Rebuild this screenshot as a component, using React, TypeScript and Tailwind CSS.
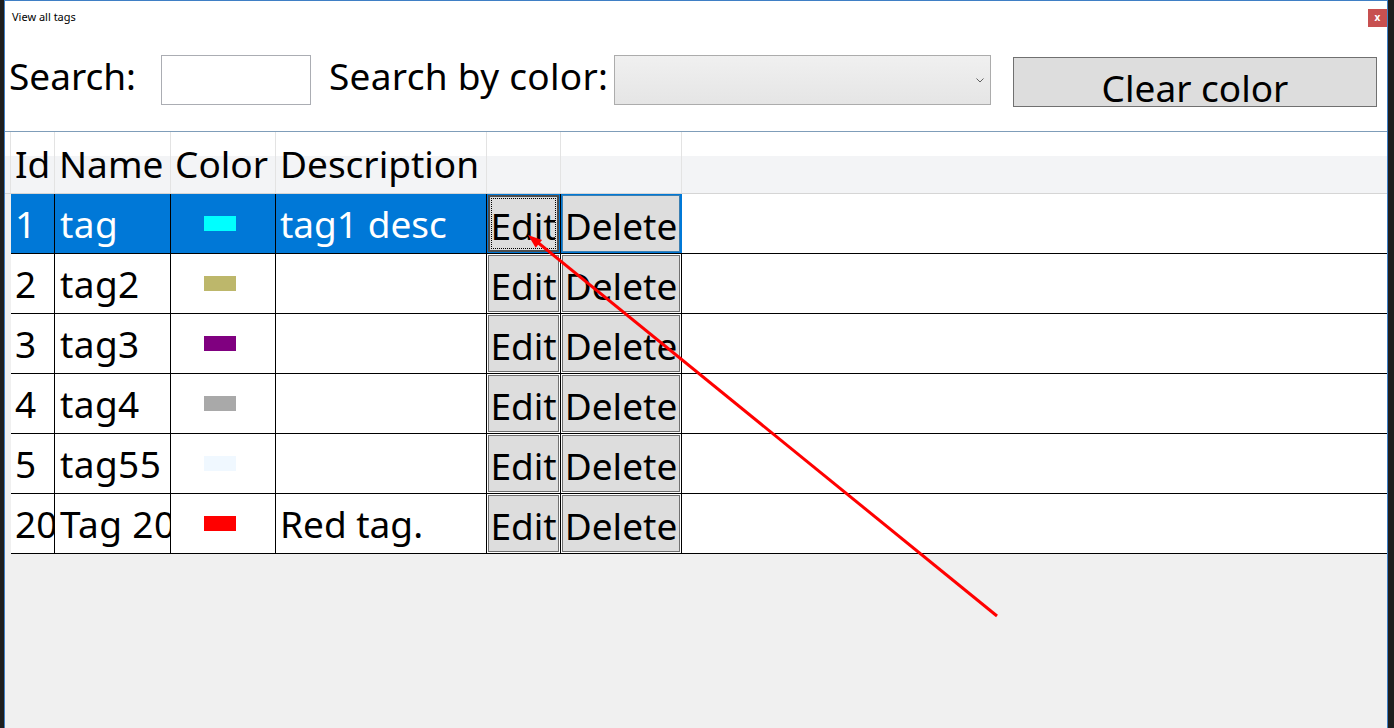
import React from 'react';

type Tag = { id: string; name: string; swatch: string; desc: string };

const tags: Tag[] = [
  { id: '1', name: 'tag', swatch: 'bg-[#00ffff]', desc: 'tag1 desc' },
  { id: '2', name: 'tag2', swatch: 'bg-[#bdb76b]', desc: '' },
  { id: '3', name: 'tag3', swatch: 'bg-[#800080]', desc: '' },
  { id: '4', name: 'tag4', swatch: 'bg-[#a9a9a9]', desc: '' },
  { id: '5', name: 'tag55', swatch: 'bg-[#f0f8ff]', desc: '' },
  { id: '20', name: 'Tag 20', swatch: 'bg-[#ff0000]', desc: 'Red tag.' },
];

const HeaderCell: React.FC<{ w: string; children?: React.ReactNode }> = ({ w, children }) => (
  <div className={`${w} h-full shrink-0 border-r border-[#e3e3e3] pl-[4px] pt-[7px] leading-[50px] overflow-hidden whitespace-nowrap`}>
    {children}
  </div>
);

const TagRow: React.FC<{ tag: Tag; selected: boolean }> = ({ tag, selected }) => {
  const cell = selected
    ? 'bg-[#0078d7] text-white'
    : 'bg-white text-black';
  const text = `h-full shrink-0 border-r border-black pl-[4px] pt-[5px] leading-[50px] overflow-hidden whitespace-nowrap ${cell}`;

  return (
    <div className="flex h-[60px] border-b border-black ml-[6px] bg-white">
      <div className={`w-[44px] ${text}`}>{tag.id}</div>
      <div className={`w-[116px] ${text} pl-[5px] tracking-[0.4px]`}>{tag.name}</div>
      <div className={`w-[105px] h-full shrink-0 border-r border-black flex items-center pl-[33px] ${cell}`}>
        <div className={`w-[32px] h-[15px] ${tag.swatch}`} />
      </div>
      <div className={`w-[211px] ${text}`}>{tag.desc}</div>
      <div className={`w-[74px] h-full shrink-0 border-r border-black p-[1px] ${cell}`}>
        {selected ? (
          <div className="h-full border-2 border-[#4d4d4d] bg-[#dddddd] p-[1px]">
            <div className="h-full border border-dotted border-black flex justify-center pt-[2px] leading-[50px] text-black overflow-hidden">
              Edit
            </div>
          </div>
        ) : (
          <div className="h-full border border-[#707070] bg-[#dddddd] flex justify-center pt-[5px] leading-[50px] text-black overflow-hidden">
            Edit
          </div>
        )}
      </div>
      <div className={`w-[121px] h-full shrink-0 border-r ${selected ? 'border-[#0078d7]' : 'border-black'} p-[1px] ${cell}`}>
        <div className={`h-full border ${selected ? 'border-[#3c7fb1]' : 'border-[#707070]'} bg-[#dddddd] flex justify-center pt-[5px] leading-[50px] text-black overflow-hidden`}>
          Delete
        </div>
      </div>
      <div className="flex-1 bg-white" />
    </div>
  );
};

const App: React.FC = () => {
  return (
    <div className="relative h-screen w-full bg-[#1e1e1e] pl-[4px] pr-[6px] overflow-hidden font-['Noto_Sans',sans-serif] text-black">
      <div className="flex h-full flex-col border-x border-t border-[#3f7fc5] bg-white">
        {/* title bar */}
        <div className="flex h-[33px] shrink-0 items-start justify-between">
          <div className="pl-[7px] pt-[8px] text-[11px] leading-[15px]">View all tags</div>
          <div className="mt-[8px] flex h-[18px] w-[19px] items-center justify-center bg-[#c75050] pb-[2px] text-[10px] font-bold leading-none text-white">
            x
          </div>
        </div>

        {/* search bar */}
        <div className="flex h-[97px] shrink-0 items-start text-[37px]">
          <div className="mt-[17px] w-[156px] shrink-0 pl-[4px] leading-[50px]">Search:</div>
          <div className="mt-[21px] h-[50px] w-[150px] shrink-0 border border-[#abadb3] bg-white" />
          <div className="mt-[17px] w-[303px] shrink-0 pl-[18px] leading-[50px] tracking-[0.3px] whitespace-nowrap">Search by color:</div>
          <div className="mt-[21px] flex h-[50px] w-[377px] shrink-0 items-center justify-end border border-[#acacac] bg-[linear-gradient(to_bottom,#f0f0f0,#e5e5e5)] pr-[6px]">
            <svg width="8" height="5" viewBox="0 0 8 5" fill="none" stroke="#606060" strokeWidth="1">
              <polyline points="0.5,0.5 4,4 7.5,0.5" />
            </svg>
          </div>
          <div className="mt-[23px] ml-[22px] flex h-[50px] w-[364px] shrink-0 justify-center border border-[#707070] bg-[#dddddd] pt-[5px] leading-[50px] overflow-hidden whitespace-nowrap">
            Clear color
          </div>
        </div>

        {/* data grid */}
        <div className="flex-1 border-t border-[#7f9db9] bg-[#f0f0f0] text-[37px]">
          <div className="flex h-[62px] border-b border-[#d5d5d5] bg-[linear-gradient(to_bottom,#ffffff_0%,#ffffff_40%,#f3f4f6_40%,#f3f4f6_100%)]">
            <div className="w-[6px] shrink-0 border-r border-[#e3e3e3]" />
            <HeaderCell w="w-[44px]">Id</HeaderCell>
            <HeaderCell w="w-[116px]">Name</HeaderCell>
            <HeaderCell w="w-[105px]">Color</HeaderCell>
            <HeaderCell w="w-[211px]">Description</HeaderCell>
            <HeaderCell w="w-[74px]" />
            <HeaderCell w="w-[121px]" />
            <div className="flex-1" />
          </div>
          {tags.map((t, i) => (
            <TagRow key={t.id} tag={t} selected={i === 0} />
          ))}
        </div>
      </div>

      {/* annotation arrow */}
      <svg className="pointer-events-none absolute inset-0" width="1394" height="728">
        <line x1="997" y1="616" x2="536" y2="241" stroke="#ff0000" strokeWidth="3" />
        <polygon points="528,235 535.7,247.7 542.1,239.9" fill="#ff0000" />
      </svg>
    </div>
  );
};

export default App;
